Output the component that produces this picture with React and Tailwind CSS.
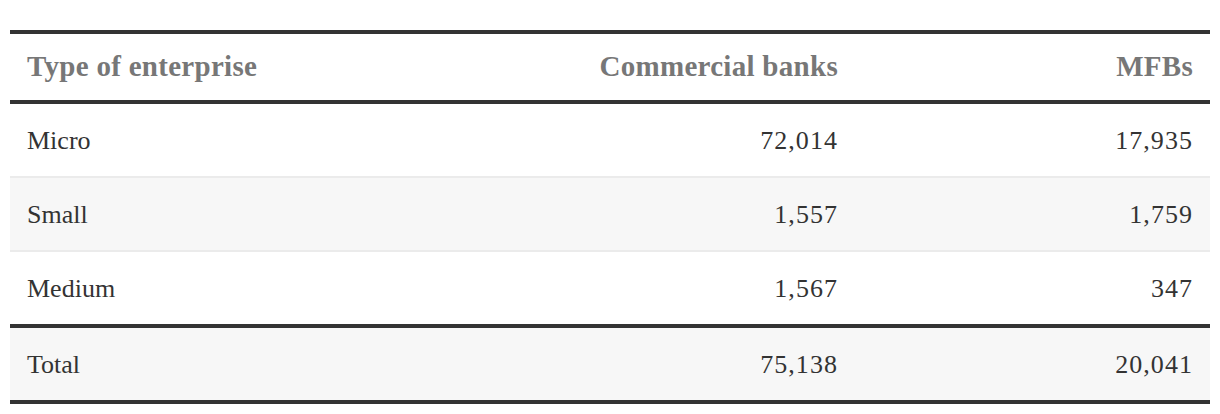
const ROWS = [
  { label: 'Micro', banks: '72,014', mfbs: '17,935' },
  { label: 'Small', banks: '1,557', mfbs: '1,759' },
  { label: 'Medium', banks: '1,567', mfbs: '347' },
]

const ROW = 'grid grid-cols-[1fr_355px_355px] items-center px-[17px]'

export default function App() {
  return (
    <div className="bg-white w-[1220px] h-[414px] pt-[30px] px-[10px]" style={{ fontFamily: '"Liberation Serif", "DejaVu Serif", serif' }}>
      <div className="border-t-4 border-b-4 border-[#333]">
        {/* Header */}
        <div className={`${ROW} h-[70px] border-b-4 border-[#333] text-[29px] font-bold text-[#777] tracking-[0.01em]`}>
          <div>Type of enterprise</div>
          <div className="text-right">Commercial banks</div>
          <div className="text-right">MFBs</div>
        </div>

        {ROWS.map((r, i) => (
          <div
            key={r.label}
            className={`${ROW} text-[26px] text-[#333] ${i % 2 === 1 ? 'bg-[#f7f7f7]' : 'bg-white'} ${i < 2 ? 'h-[74px] border-b-2 border-[#ebebeb]' : 'h-[72px]'}`}
          >
            <div>{r.label}</div>
            <div className="text-right tracking-[0.04em]">{r.banks}</div>
            <div className="text-right tracking-[0.04em]">{r.mfbs}</div>
          </div>
        ))}

        {/* Total */}
        <div className={`${ROW} h-[76px] border-t-4 border-[#333] bg-[#f7f7f7] text-[26px] text-[#333]`}>
          <div>Total</div>
          <div className="text-right tracking-[0.04em]">75,138</div>
          <div className="text-right tracking-[0.04em]">20,041</div>
        </div>
      </div>
    </div>
  )
}
